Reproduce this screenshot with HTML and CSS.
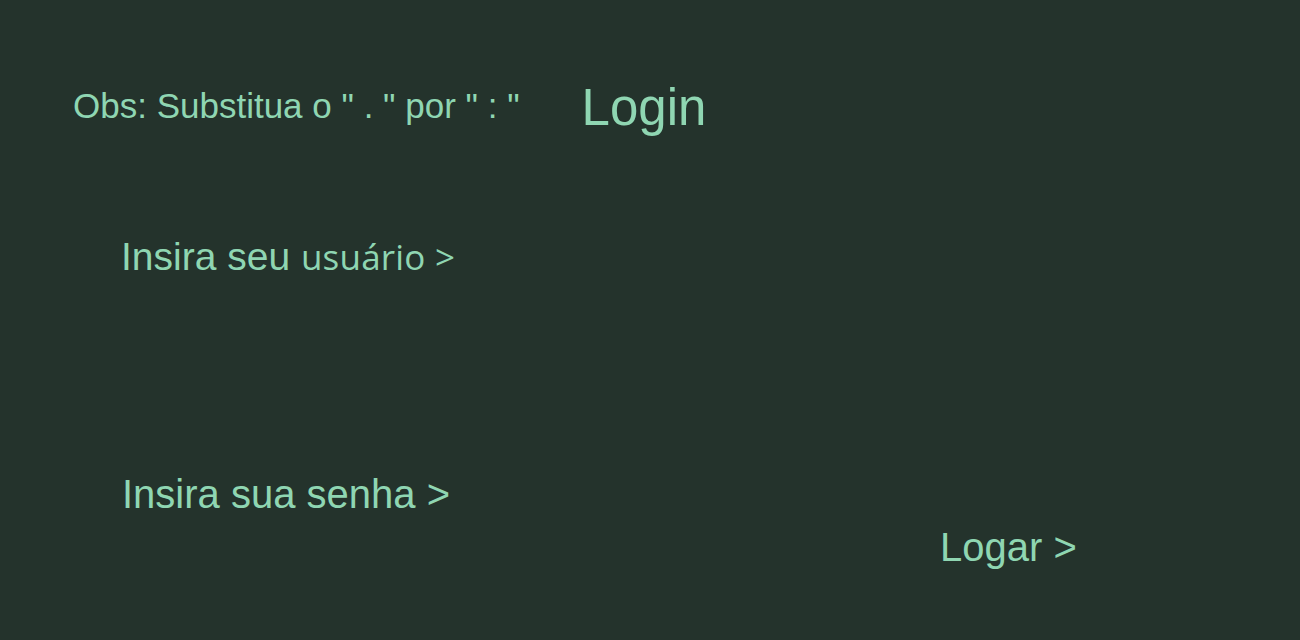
FILE: index.html
```html
<!DOCTYPE html>
<html lang="pt">
<head>
<meta charset="utf-8">
<title>Login</title>
<link rel="stylesheet" href="styles.css">
</head>
<body>
<main class="page">
  <header class="top">
    <p class="obs">Obs: Substitua o " . " por " : "</p>
    <h1 class="title">Login</h1>
  </header>
  <div class="field field-user">
    <span class="label">Insira seu</span> <span class="label-alt">usuário &gt;</span>
  </div>
  <div class="field field-pass">
    <span class="label">Insira sua senha &gt;</span>
  </div>
  <div class="actions">
    <span class="submit">Logar &gt;</span>
  </div>
</main>
</body>
</html>
```

FILE: styles.css
```css
html, body {
  margin: 0;
  padding: 0;
  background: #24332c;
  height: 100%;
}
.page {
  font-family: "Liberation Sans", Arial, sans-serif;
  color: #8fd6b2;
  display: flex;
  flex-direction: column;
  min-height: 640px;
  overflow: hidden;
}
.top {
  display: flex;
  align-items: flex-start;
  padding: 82px 0 0 73px;
}
.obs {
  margin: 6px 0 0 0;
  font-size: 35px;
  line-height: 35px;
  font-weight: normal;
}
.title {
  margin: 0 0 0 62px;
  font-size: 51px;
  line-height: 51px;
  font-weight: normal;
}
.field {
  padding-left: 121px;
  white-space: nowrap;
}
.field-user {
  margin-top: 104px;
  font-size: 39px;
  line-height: 39px;
}
.label-alt {
  font-family: "Open Sans", "Noto Sans", sans-serif;
  font-size: 35px;
  letter-spacing: 0.2px;
}
.field-pass {
  margin-top: 198px;
  padding-left: 122px;
  font-size: 40px;
  line-height: 40px;
}
.actions {
  margin-top: 13px;
  padding-left: 940px;
  font-size: 40px;
  line-height: 40px;
}
```
